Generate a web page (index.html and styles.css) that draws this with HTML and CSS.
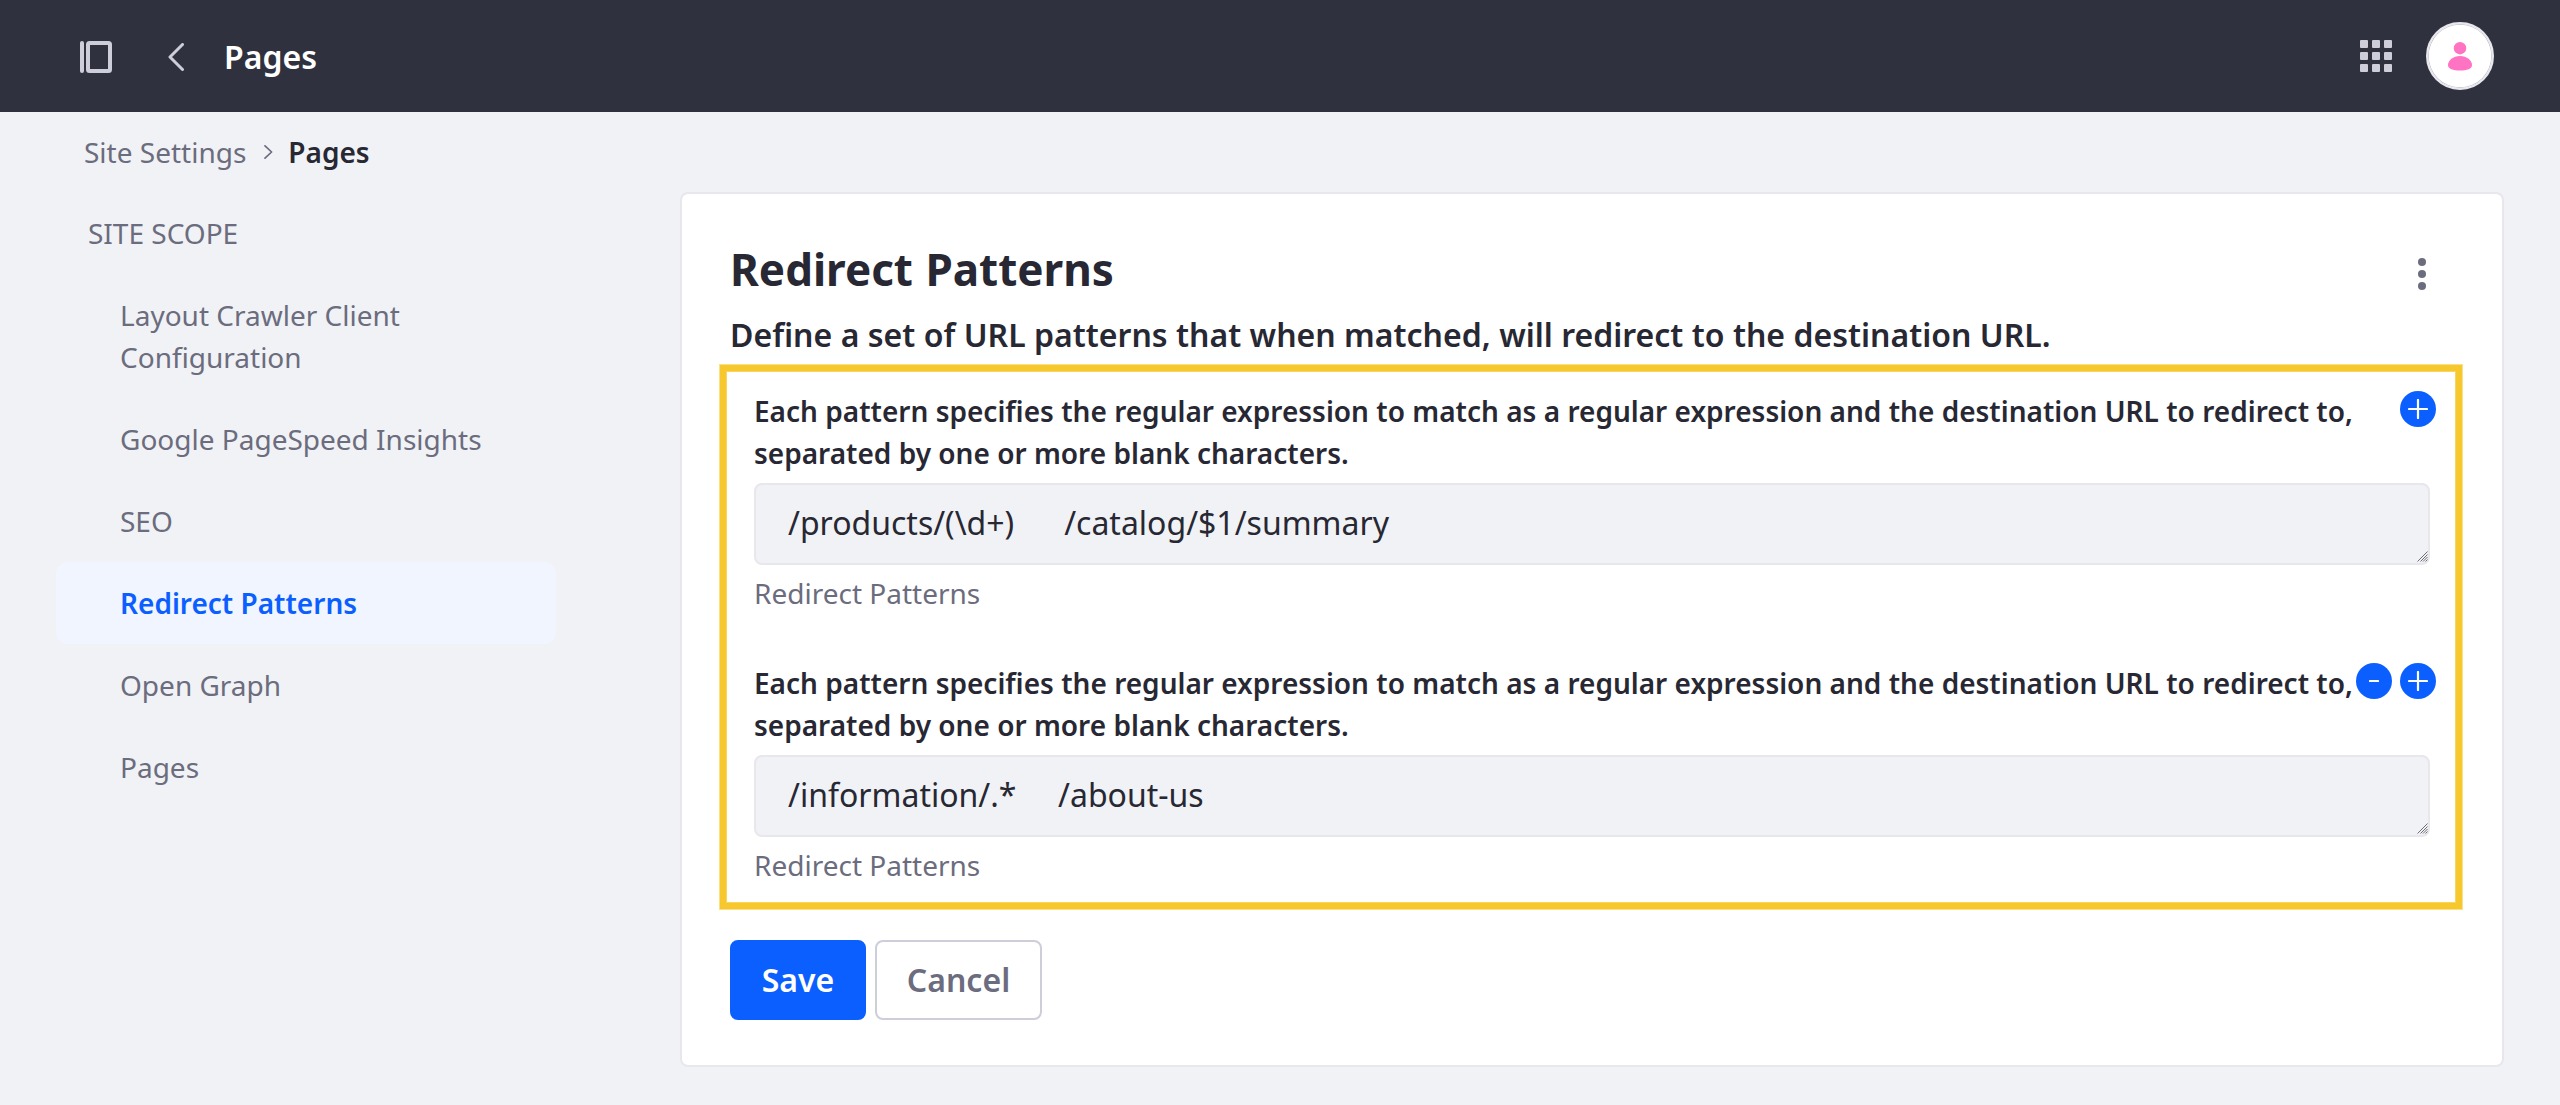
FILE: index.html
```html
<!DOCTYPE html>
<html lang="en">
<head>
<meta charset="utf-8">
<title>Pages</title>
<link rel="stylesheet" href="styles.css">
</head>
<body>
<header class="topbar">
  <svg class="icon-panel" width="32" height="32" viewBox="0 0 32 32"><rect x="0" y="0" width="4" height="32" rx="2" fill="currentColor"/><rect x="8" y="2" width="22" height="28" rx="1.5" fill="none" stroke="currentColor" stroke-width="4"/></svg>
  <svg class="icon-back" width="16" height="28" viewBox="0 0 16 28"><path d="M14.5 1.5 2 14l12.500 12.500" fill="none" stroke="currentColor" stroke-width="3" stroke-linecap="round" stroke-linejoin="round"/></svg>
  <h1 class="topbar-title">Pages</h1>
  <svg class="icon-grid" width="32" height="32" viewBox="0 0 32 32" fill="currentColor"><rect width="8" height="8" rx="1"/><rect x="12" width="8" height="8" rx="1"/><rect x="24" width="8" height="8" rx="1"/><rect y="12" width="8" height="8" rx="1"/><rect x="12" y="12" width="8" height="8" rx="1"/><rect x="24" y="12" width="8" height="8" rx="1"/><rect y="24" width="8" height="8" rx="1"/><rect x="12" y="24" width="8" height="8" rx="1"/><rect x="24" y="24" width="8" height="8" rx="1"/></svg>
  <span class="avatar"><svg width="24" height="29" viewBox="0 0 24 29" fill="#ff73c3"><circle cx="12" cy="6.200" r="6.200"/><path d="M12 14C5 14 0 18.500 0 23c0 4 5 5.500 12 5.500S24 27 24 23c0-4.500-5-9-12-9z"/></svg></span>
</header>
<nav class="breadcrumb">
  <a>Site Settings</a>
  <svg width="9" height="14" viewBox="0 0 9 14"><path d="M1 .8 7.600 7 1 13.200" fill="none" stroke="currentColor" stroke-width="1.700" stroke-linecap="round" stroke-linejoin="round"/></svg>
  <strong>Pages</strong>
</nav>
<div class="layout">
  <aside class="sidebar">
    <div class="scope">SITE SCOPE</div>
    <a class="nav-item">Layout Crawler Client Configuration</a>
    <a class="nav-item">Google PageSpeed Insights</a>
    <a class="nav-item">SEO</a>
    <a class="nav-item active">Redirect Patterns</a>
    <a class="nav-item">Open Graph</a>
    <a class="nav-item">Pages</a>
  </aside>
  <main class="sheet">
    <div class="sheet-head">
      <h2>Redirect Patterns</h2>
      <svg class="icon-menu" width="8" height="32" viewBox="0 0 8 32" fill="currentColor"><circle cx="4" cy="4" r="4"/><circle cx="4" cy="16" r="4"/><circle cx="4" cy="28" r="4"/></svg>
    </div>
    <p class="intro">Define a set of URL patterns that when matched, will redirect to the destination URL.</p>
    <section class="patterns">
      <div class="field">
        <label>Each pattern specifies the regular expression to match as a regular expression and the destination URL to redirect to, separated by one or more blank characters.</label>
        <div class="input-wrap">
          <textarea rows="1" spellcheck="false">/products/(\d+)      /catalog/$1/summary</textarea>
          <svg class="grip" width="11" height="11" viewBox="0 0 11 11"><path d="M.5 10.500 10.500.5M3.500 10.500l7-7M6 10.500 10.500 6M8.500 10.500l2-2" stroke="#6f6f74" stroke-width="1"/></svg>
        </div>
        <span class="help">Redirect Patterns</span>
        <div class="row-actions">
          <button class="round"><svg width="20" height="20" viewBox="0 0 20 20"><path d="M1 10h18M10 1v18" stroke="#fff" stroke-width="2.200" stroke-linecap="round"/></svg></button>
        </div>
      </div>
      <div class="field">
        <label>Each pattern specifies the regular expression to match as a regular expression and the destination URL to redirect to, separated by one or more blank characters.</label>
        <div class="input-wrap">
          <textarea rows="1" spellcheck="false">/information/.*     /about-us</textarea>
          <svg class="grip" width="11" height="11" viewBox="0 0 11 11"><path d="M.5 10.500 10.500.5M3.500 10.500l7-7M6 10.500 10.500 6M8.500 10.500l2-2" stroke="#6f6f74" stroke-width="1"/></svg>
        </div>
        <span class="help">Redirect Patterns</span>
        <div class="row-actions">
          <button class="round"><svg width="10" height="2" viewBox="0 0 10 2"><rect width="10" height="2" rx=".5" fill="#fff"/></svg></button>
          <button class="round"><svg width="20" height="20" viewBox="0 0 20 20"><path d="M1 10h18M10 1v18" stroke="#fff" stroke-width="2.200" stroke-linecap="round"/></svg></button>
        </div>
      </div>
    </section>
    <div class="buttons">
      <button class="btn primary">Save</button>
      <button class="btn secondary">Cancel</button>
    </div>
  </main>
</div>
</body>
</html>
```
FILE: styles.css
```css
* { box-sizing: border-box; }
body {
  margin: 0;
  background: #f1f2f5;
  color: #272833;
  font: 28px/42px "Noto Sans", sans-serif;
}
svg { display: block; flex: none; }
button, textarea { font-family: inherit; margin: 0; }
.topbar {
  display: flex;
  align-items: center;
  height: 112px;
  padding: 0 66px 0 80px;
  background: #30313f;
  color: #cdced9;
}
.icon-panel { margin-top: 2px; }
.icon-back { margin: 2px 0 0 56px; }
.topbar-title {
  flex: 1;
  margin: 2px 0 0 40px;
  color: #fff;
  font-size: 32px;
  font-weight: 600;
  line-height: 48px;
}
.avatar {
  display: flex;
  align-items: center;
  justify-content: center;
  width: 68px;
  height: 68px;
  margin-left: 34px;
  border: 2px solid #e7e7ed;
  border-radius: 50%;
  background: #fff;
  box-shadow: inset 0 0 0 0.700px #bcbcc6;
}
.breadcrumb {
  display: flex;
  align-items: center;
  height: 42px;
  margin: 19px 84px;
  color: #6b6c7e;
}
.breadcrumb svg { margin: 0 15px 0 18px; }
.breadcrumb strong { color: #272833; font-weight: 600; }
.layout {
  display: flex;
  justify-content: space-between;
  padding: 0 56px;
}
.sidebar { width: 500px; color: #6b6c7e; }
.scope { padding: 20px 32px; }
.nav-item {
  display: block;
  padding: 20px 64px;
  border-radius: 12px;
}
.active { background: #f0f5ff; color: #0b5fff; font-weight: 600; }
.sheet {
  width: 1824px;
  height: 875px;
  padding: 45px 39px 0 37px;
  border: 2px solid #e7e7ed;
  border-radius: 8px;
  background: #fff;
}
.sheet-head {
  display: flex;
  justify-content: space-between;
  padding: 0 37px 0 11px;
}
.sheet-head h2 {
  margin: 0;
  font-size: 44px;
  font-weight: 700;
  line-height: 60px;
  word-spacing: 1px;
}
.icon-menu { margin-top: 19px; color: #6b6c7e; }
.intro {
  margin: 12px 0 5px 11px;
  font-size: 32px;
  font-weight: 600;
  line-height: 48px;
  word-spacing: 0.100px;
}
.patterns {
  display: flex;
  flex-direction: column;
  gap: 48px;
  height: 546px;
  padding: 19px 26px 0 28px;
  border: 7px solid #f7c82d;
  outline: 1px solid #fbe08a;
  outline-offset: -1px;
  box-shadow: inset 0 0 0 1px #f9d560;
}
.field { position: relative; display: flex; flex-direction: column; }
.field label { font-weight: 600; margin-bottom: 9px; word-spacing: 0.060px; }
.input-wrap { position: relative; height: 82px; }
.input-wrap textarea {
  display: block;
  width: 100%;
  height: 82px;
  padding: 14px 32px 12px;
  border: 2px solid #e7e7ed;
  border-radius: 8px;
  background: #f1f2f5;
  color: #272833;
  font-size: 32px;
  line-height: 48px;
  outline: none;
  resize: none;
}
.grip { position: absolute; right: 2px; bottom: 3px; }
.help { margin-top: 7px; color: #6b6c7e; }
.row-actions {
  position: absolute;
  top: 1px;
  right: -6px;
  display: flex;
  gap: 8px;
}
.round {
  display: flex;
  align-items: center;
  justify-content: center;
  width: 36px;
  height: 36px;
  padding: 0;
  border: 0;
  border-radius: 50%;
  background: #0b5fff;
}
.buttons { display: flex; gap: 9px; padding: 30px 11px; }
.btn {
  height: 80px;
  padding: 0 0 2px;
  border: 2px solid #0b5fff;
  border-radius: 8px;
  font-size: 32px;
  font-weight: 600;
}
.primary { width: 136px; background: #0b5fff; color: #fff; }
.secondary { width: 167px; border-color: #cdced9; background: #fff; color: #6b6c7e; }
```
